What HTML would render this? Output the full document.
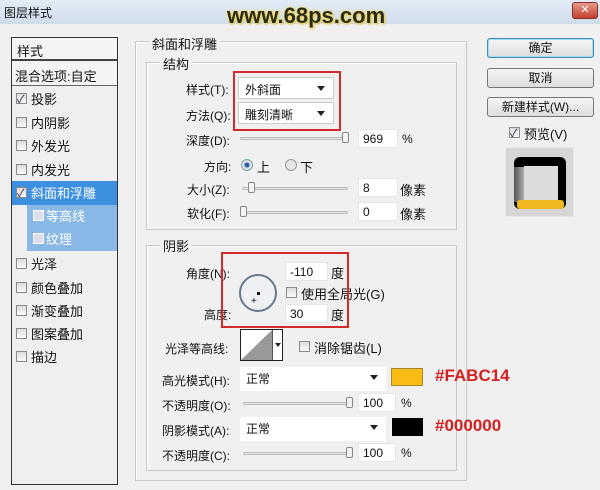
<!DOCTYPE html>
<html><head><meta charset="utf-8"><style>
*{margin:0;padding:0;box-sizing:border-box}
body{width:600px;height:490px;background:#f0f0f0;font-family:"Liberation Sans","Noto Sans CJK SC",sans-serif;font-size:12px;color:#111;position:relative;overflow:hidden}
.a{position:absolute;white-space:nowrap}
.cb{position:absolute;width:11px;height:11px;border:1px solid #8a8a8a;background:linear-gradient(#ddd,#fafafa)}
.cb.on::after{content:"✓";position:absolute;left:0;top:-3px;font-size:11px;color:#224}
.inp{position:absolute;background:#fff;height:19px;border:1px solid #e6e6e6;padding:2px 4px;font-size:12px}
.dd{position:absolute;background:#fff;border:1px solid #ccc;height:22px;padding:3px 6px}
.dd::after{content:"";position:absolute;right:8px;top:8px;border:4px solid transparent;border-top:5px solid #222}
.sl{position:absolute;height:3px;border:1px solid #bbb;background:#e8e8e8;border-radius:2px}
.kn{position:absolute;width:7px;height:11px;border:1px solid #888;background:#f4f4f4;border-radius:2px}
.gb{position:absolute;border:1px solid #c8c8c8;box-shadow:1px 1px 0 #fff inset}
.lbl{position:absolute;background:#f0f0f0;padding:0 3px;font-size:13px}
.btn{position:absolute;left:487px;width:107px;height:20px;border:1px solid #777;border-radius:3px;background:linear-gradient(#f6f6f6,#ddd);text-align:center;line-height:18px;font-size:12px}
.li{position:absolute;left:17px;font-size:13px}
.r{position:absolute;border:2px solid #d42a2a}
</style></head><body>
<div class="a" style="left:0;top:0;width:600px;height:24px;background:linear-gradient(#e3ecf6,#cfdcea)"></div>
<div class="a" style="left:4px;top:4px;font-size:12px">图层样式</div>
<div class="a" style="left:227px;top:3px;font-size:22px;font-weight:bold;color:#2b2b10;text-shadow:0 0 3px #f5e07a,0 0 2px #f5e07a,1px 1px 2px #d4b020">www.68ps.com</div>
<div class="a" style="left:572px;top:2px;width:26px;height:17px;background:linear-gradient(#e89a8a,#c2402e);border:1px solid #8a3028;border-radius:3px;color:#fff;text-align:center;font-size:11px;line-height:15px">✕</div>

<!-- left list -->
<div class="a" style="left:11px;top:37px;width:107px;height:448px;border:1px solid #333;background:#efefef"></div>
<div class="a" style="left:12px;top:38px;width:105px;height:23px;border-bottom:2px solid #444;background:#f4f4f4"></div>
<div class="li" style="top:41px">样式</div>
<div class="a" style="left:12px;top:62px;width:105px;height:24px;border-bottom:1px solid #666;background:#f4f4f4"></div>
<div class="li" style="top:66px;left:15px">混合选项:自定</div>
<div class="a" style="left:12px;top:181px;width:105px;height:24px;background:#3d8fe0"></div>
<div class="a" style="left:27px;top:205px;width:90px;height:46px;background:#8ab8e6"></div>
<div class="cb on" style="left:16px;top:93px"></div><div class="li" style="left:31px;top:89px">投影</div>
<div class="cb" style="left:16px;top:117px"></div><div class="li" style="left:31px;top:113px">内阴影</div>
<div class="cb" style="left:16px;top:140px"></div><div class="li" style="left:31px;top:136px">外发光</div>
<div class="cb" style="left:16px;top:164px"></div><div class="li" style="left:31px;top:160px">内发光</div>
<div class="cb on" style="left:16px;top:187px"></div><div class="li" style="left:31px;top:183px;color:#fff">斜面和浮雕</div>
<div class="cb" style="left:33px;top:210px;background:#dde;border-color:#fff"></div><div class="li" style="left:46px;top:206px;color:#fff">等高线</div>
<div class="cb" style="left:33px;top:233px;background:#dde;border-color:#fff"></div><div class="li" style="left:46px;top:229px;color:#fff">纹理</div>
<div class="cb" style="left:16px;top:258px"></div><div class="li" style="left:31px;top:254px">光泽</div>
<div class="cb" style="left:16px;top:282px"></div><div class="li" style="left:31px;top:278px">颜色叠加</div>
<div class="cb" style="left:16px;top:305px"></div><div class="li" style="left:31px;top:301px">渐变叠加</div>
<div class="cb" style="left:16px;top:328px"></div><div class="li" style="left:31px;top:324px">图案叠加</div>
<div class="cb" style="left:16px;top:351px"></div><div class="li" style="left:31px;top:347px">描边</div>

<!-- main groups -->
<div class="gb" style="left:135px;top:41px;width:332px;height:440px"></div>
<div class="lbl" style="left:149px;top:34px">斜面和浮雕</div>
<div class="gb" style="left:146px;top:62px;width:311px;height:168px"></div>
<div class="lbl" style="left:160px;top:54px">结构</div>
<div class="gb" style="left:146px;top:245px;width:311px;height:226px"></div>
<div class="lbl" style="left:160px;top:236px">阴影</div>

<div class="a" style="left:186px;top:81px">样式(T):</div>
<div class="dd" style="left:238px;top:77px;width:96px">外斜面</div>
<div class="a" style="left:186px;top:107px">方法(Q):</div>
<div class="dd" style="left:238px;top:102px;width:96px">雕刻清晰</div>
<div class="r" style="left:233px;top:71px;width:108px;height:60px"></div>
<div class="a" style="left:186px;top:132px">深度(D):</div>
<div class="sl" style="left:240px;top:137px;width:106px"></div><div class="kn" style="left:342px;top:132px"></div>
<div class="inp" style="left:358px;top:129px;width:40px">969</div><div class="a" style="left:402px;top:132px">%</div>
<div class="a" style="left:204px;top:158px">方向:</div>
<div class="a" style="left:241px;top:159px;width:12px;height:12px;border-radius:50%;border:1px solid #7a9;background:radial-gradient(#2a5aa0 30%,#dde 40%)"></div>
<div class="a" style="left:257px;top:157px;font-size:13px">上</div>
<div class="a" style="left:285px;top:159px;width:12px;height:12px;border-radius:50%;border:1px solid #999;background:#e8e8e8"></div>
<div class="a" style="left:300px;top:157px;font-size:13px">下</div>
<div class="a" style="left:187px;top:181px">大小(Z):</div>
<div class="sl" style="left:242px;top:187px;width:106px"></div><div class="kn" style="left:248px;top:182px"></div>
<div class="inp" style="left:358px;top:178px;width:40px">8</div><div class="a" style="left:400px;top:180px;font-size:13px">像素</div>
<div class="a" style="left:187px;top:205px">软化(F):</div>
<div class="sl" style="left:242px;top:211px;width:106px"></div><div class="kn" style="left:240px;top:206px"></div>
<div class="inp" style="left:358px;top:202px;width:40px">0</div><div class="a" style="left:400px;top:204px;font-size:13px">像素</div>

<div class="a" style="left:186px;top:265px">角度(N):</div>
<div class="a" style="left:239px;top:274px;width:38px;height:38px;border-radius:50%;border:2px solid #6a7a8a;background:#eef0f4"></div>
<div class="a" style="left:257px;top:292px;width:3px;height:3px;background:#111"></div>
<div class="a" style="left:251px;top:296px;font-size:10px">+</div>
<div class="inp" style="left:285px;top:262px;width:43px">-110</div><div class="a" style="left:331px;top:263px;font-size:13px">度</div>
<div class="cb" style="left:286px;top:287px"></div><div class="a" style="left:301px;top:284px;font-size:13px">使用全局光(G)</div>
<div class="a" style="left:204px;top:306px">高度:</div>
<div class="inp" style="left:285px;top:304px;width:43px">30</div><div class="a" style="left:331px;top:305px;font-size:13px">度</div>
<div class="r" style="left:221px;top:252px;width:128px;height:76px"></div>

<div class="a" style="left:165px;top:340px">光泽等高线:</div>
<div class="a" style="left:240px;top:329px;width:43px;height:32px;border:1px solid #222;background:#fff"></div>
<svg class="a" style="left:241px;top:330px" width="31" height="30"><polygon points="0,30 31,0 31,30" fill="#999"/></svg>
<div class="a" style="left:272px;top:330px;width:1px;height:30px;background:#555"></div>
<div class="a" style="left:275px;top:343px;border:3px solid transparent;border-top:4px solid #222"></div>
<div class="cb" style="left:299px;top:341px"></div><div class="a" style="left:314px;top:338px;font-size:13px">消除锯齿(L)</div>

<div class="a" style="left:162px;top:372px">高光模式(H):</div>
<div class="dd" style="left:240px;top:367px;width:146px;height:24px;border:none">正常</div>
<div class="a" style="left:391px;top:368px;width:32px;height:18px;background:#fabc14;border:1px solid #a08830"></div>
<div class="a" style="left:435px;top:366px;font-size:17px;font-weight:bold;color:#d42020">#FABC14</div>
<div class="a" style="left:162px;top:397px">不透明度(O):</div>
<div class="sl" style="left:243px;top:402px;width:108px"></div><div class="kn" style="left:346px;top:397px"></div>
<div class="inp" style="left:358px;top:393px;width:38px">100</div><div class="a" style="left:401px;top:396px">%</div>

<div class="a" style="left:162px;top:422px">阴影模式(A):</div>
<div class="dd" style="left:240px;top:417px;width:146px;height:24px;border:none">正常</div>
<div class="a" style="left:392px;top:418px;width:31px;height:18px;background:#000"></div>
<div class="a" style="left:435px;top:416px;font-size:17px;font-weight:bold;color:#d42020">#000000</div>
<div class="a" style="left:162px;top:447px">不透明度(C):</div>
<div class="sl" style="left:243px;top:452px;width:108px"></div><div class="kn" style="left:346px;top:447px"></div>
<div class="inp" style="left:358px;top:443px;width:38px">100</div><div class="a" style="left:401px;top:446px">%</div>

<!-- right -->
<div class="btn" style="top:38px;border-color:#3b8fb8;box-shadow:0 0 0 1px #a8d8f0 inset">确定</div>
<div class="btn" style="top:68px">取消</div>
<div class="btn" style="top:97px">新建样式(W)...</div>
<div class="cb on" style="left:509px;top:127px"></div><div class="a" style="left:524px;top:124px;font-size:13px">预览(V)</div>
<div class="a" style="left:505px;top:147px;width:69px;height:70px;background:#d6d6d6;border:1px solid #e8e8e8"></div>
<div class="a" style="left:514px;top:157px;width:52px;height:52px;background:#000;border-radius:6px"></div>
<div class="a" style="left:514px;top:167px;width:10px;height:35px;background:linear-gradient(90deg,#555,#aaa)"></div>
<div class="a" style="left:524px;top:166px;width:34px;height:36px;background:#dcdcdc"></div>
<div class="a" style="left:517px;top:200px;width:47px;height:9px;background:#f0b81e;border-radius:3px"></div>
</body></html>
